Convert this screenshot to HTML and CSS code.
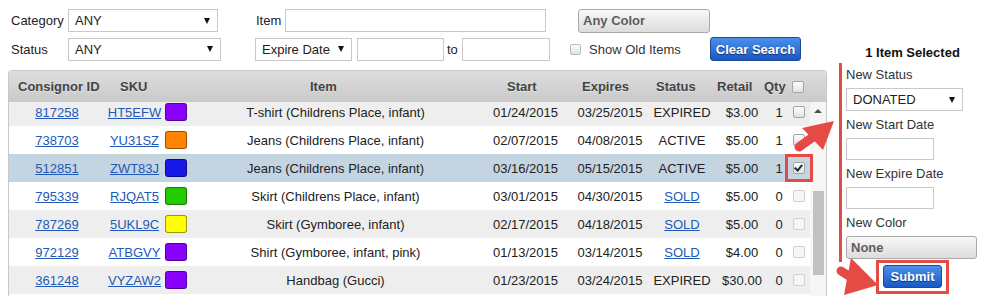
FILE: index.html
```html
<!DOCTYPE html>
<html lang="en">

<head>
    <meta charset="UTF-8">
    <meta name="viewport" content="width=device-width, initial-scale=1.0">
    <title>Consignment Inventory</title>
    <link rel="stylesheet" href="styles.css">
</head>

<body>
    <div class="page">
        <div class="main">
            <!-- Search filters -->
            <div class="filters">
                <div class="filter-row">
                    <span class="lbl">Category</span>
                    <div class="sel sel-cat"><span>ANY</span><i class="caret"></i></div>
                    <span class="lbl-item">Item</span>
                    <input class="txt txt-item" type="text">
                    <button class="btn-gray btn-color">Any Color</button>
                </div>
                <div class="filter-row">
                    <span class="lbl">Status</span>
                    <div class="sel sel-status"><span>ANY</span><i class="caret"></i></div>
                    <div class="sel sel-date"><span>Expire Date</span><i class="caret"></i></div>
                    <input class="txt txt-from" type="text">
                    <span class="to">to</span>
                    <input class="txt txt-to" type="text">
                    <input class="cb cb-old" type="checkbox">
                    <span class="old">Show Old Items</span>
                    <button class="btn-blue btn-clear">Clear Search</button>
                </div>
            </div>

            <!-- Items table -->
            <div class="grid">
                <div class="grid-head">
                    <span>Consignor ID</span>
                    <span>SKU</span>
                    <span>Item</span>
                    <span>Start</span>
                    <span>Expires</span>
                    <span>Status</span>
                    <span>Retail</span>
                    <span>Qty</span>
                    <span class="cell-cb"><input class="cb" type="checkbox"></span>
                </div>
                <div class="grid-body">
                    <div class="rows">
                        <div class="row">
                            <a href="#">817258</a><a href="#">HT5EFW</a><span class="swatch purple"></span>
                            <span>T-shirt (Childrens Place, infant)</span><span>01/24/2015</span><span>03/25/2015</span>
                            <span>EXPIRED</span><span>$3.00</span><span>1</span>
                            <span class="cell-cb"><input class="cb" type="checkbox"></span>
                        </div>
                        <div class="row">
                            <a href="#">738703</a><a href="#">YU31SZ</a><span class="swatch orange"></span>
                            <span>Jeans (Childrens Place, infant)</span><span>02/07/2015</span><span>04/08/2015</span>
                            <span>ACTIVE</span><span>$5.00</span><span>1</span>
                            <span class="cell-cb"><input class="cb" type="checkbox"></span>
                        </div>
                        <div class="row picked">
                            <a href="#">512851</a><a href="#">ZWT83J</a><span class="swatch blue"></span>
                            <span>Jeans (Childrens Place, infant)</span><span>03/16/2015</span><span>05/15/2015</span>
                            <span>ACTIVE</span><span>$5.00</span><span>1</span>
                            <span class="cell-cb"><span class="mark"><input class="cb" type="checkbox" checked></span></span>
                        </div>
                        <div class="row">
                            <a href="#">795339</a><a href="#">RJQAT5</a><span class="swatch green"></span>
                            <span>Skirt (Childrens Place, infant)</span><span>03/01/2015</span><span>04/30/2015</span>
                            <a href="#">SOLD</a><span>$5.00</span><span>0</span>
                            <span class="cell-cb"><input class="cb" type="checkbox" disabled></span>
                        </div>
                        <div class="row">
                            <a href="#">787269</a><a href="#">5UKL9C</a><span class="swatch yellow"></span>
                            <span>Skirt (Gymboree, infant)</span><span>02/17/2015</span><span>04/18/2015</span>
                            <a href="#">SOLD</a><span>$5.00</span><span>0</span>
                            <span class="cell-cb"><input class="cb" type="checkbox" disabled></span>
                        </div>
                        <div class="row">
                            <a href="#">972129</a><a href="#">ATBGVY</a><span class="swatch purple"></span>
                            <span>Shirt (Gymboree, infant, pink)</span><span>01/13/2015</span><span>03/14/2015</span>
                            <a href="#">SOLD</a><span>$4.00</span><span>0</span>
                            <span class="cell-cb"><input class="cb" type="checkbox" disabled></span>
                        </div>
                        <div class="row">
                            <a href="#">361248</a><a href="#">VYZAW2</a><span class="swatch purple"></span>
                            <span>Handbag (Gucci)</span><span>01/23/2015</span><span>03/24/2015</span>
                            <span>EXPIRED</span><span>$30.00</span><span>0</span>
                            <span class="cell-cb"><input class="cb" type="checkbox" disabled></span>
                        </div>
                    </div>
                    <div class="scroll">
                        <i class="up"></i>
                        <div class="thumb"></div>
                    </div>
                </div>
            </div>
        </div>

        <!-- Bulk edit panel -->
        <div class="side">
            <div class="sel-count">1 Item Selected</div>
            <div class="edit">
                <div class="field-lbl">New Status</div>
                <div class="sel sel-new"><span>DONATED</span><i class="caret"></i></div>
                <div class="field-lbl">New Start Date</div>
                <input class="txt txt-new" type="text">
                <div class="field-lbl">New Expire Date</div>
                <input class="txt txt-new" type="text">
                <div class="field-lbl">New Color</div>
                <button class="btn-gray btn-none">None</button>
            </div>
            <div class="submit-wrap">
                <span class="submit-box"><button class="btn-blue btn-submit">Submit</button></span>
            </div>
        </div>

        <!-- Annotation arrows -->
        <svg class="arrows" width="986" height="296" viewBox="0 0 986 296">
            <line x1="799" y1="147" x2="813" y2="137" stroke="#e64a45" stroke-width="9" stroke-linecap="round" />
            <polygon points="802,128 834,121 823,150" fill="#e64a45" />
            <line x1="841" y1="271" x2="849" y2="276" stroke="#e64a45" stroke-width="9" stroke-linecap="round" />
            <polygon points="851,258 878,285 844,295" fill="#e64a45" />
        </svg>
    </div>
</body>

</html>
```

FILE: styles.css
```css
body {
    margin: 0;
    font-family: 'Liberation Sans', Arial, sans-serif;
    font-size: 13px;
    color: #222;
    background: #fff;
    overflow: hidden;
}

a {
    color: #2259b8;
}

input,
button {
    font-family: inherit;
    font-size: 13px;
    margin: 0;
    box-sizing: border-box;
}

.page {
    position: relative;
    display: flex;
    height: 296px;
    overflow: hidden;
}

.main {
    width: 839px;
    flex: none;
}

.side {
    width: 147px;
    flex: none;
    padding-top: 45px;
}

/* filters */

.filters {
    padding: 9px 0 0 11px;
}

.filter-row {
    display: flex;
    align-items: center;
    height: 23px;
}

.filter-row + .filter-row {
    margin-top: 5px;
    height: 24px;
}

.lbl {
    width: 57px;
    flex: none;
}

.lbl-item {
    width: 29px;
    margin-left: 38px;
    flex: none;
}

.sel {
    display: flex;
    align-items: center;
    justify-content: space-between;
    box-sizing: border-box;
    height: 23px;
    padding: 0 7px 0 6px;
    border: 1px solid #c8c8c8;
    background: #fff;
    flex: none;
}

.caret {
    width: 0;
    height: 0;
    border-left: 3px solid transparent;
    border-right: 3px solid transparent;
    border-top: 6px solid #111;
}

.sel-cat {
    width: 150px;
}

.sel-status {
    width: 153px;
}

.sel-date {
    width: 97px;
    margin-left: 34px;
}

.txt {
    height: 23px;
    padding: 0 4px;
    border: 1px solid #c8c8c8;
    background: #fff;
    flex: none;
}

.txt-item {
    width: 261px;
}

.txt-from {
    width: 87px;
    margin-left: 5px;
}

.to {
    margin-left: 3px;
    width: 12px;
    flex: none;
}

.txt-to {
    width: 88px;
    margin-left: 3px;
}

.old {
    width: 121px;
    margin-left: 8px;
    color: #333;
    flex: none;
}

.btn-gray {
    height: 24px;
    padding: 0 4px;
    text-align: left;
    border: 1px solid #a9a9a9;
    border-radius: 3px;
    background: linear-gradient(#f8f8f8, #dcdcdc);
    color: #5e5e5e;
    font-weight: bold;
}

.btn-color {
    width: 132px;
    margin-left: 32px;
}

.btn-blue {
    height: 24px;
    padding: 0;
    white-space: nowrap;
    border: 1px solid #1c4c98;
    border-radius: 3px;
    background: linear-gradient(#4b90ea, #1a58c6);
    color: #fff;
    font-weight: bold;
    text-shadow: 0 1px 1px rgba(0, 0, 0, 0.55);
}

.btn-clear {
    width: 91px;
}

/* checkboxes */

.cb {
    appearance: none;
    -webkit-appearance: none;
    width: 12px;
    height: 12px;
    border: 1px solid #a3a3a3;
    border-radius: 2px;
    background: linear-gradient(#fdfdfd, #e2e2e2);
    flex: none;
}

.cb:disabled {
    border-color: #d0d0d0;
    background: #f6f6f6;
}

.cb:checked::after {
    content: '';
    display: block;
    width: 3px;
    height: 6px;
    margin: 0 auto;
    border: solid #2a2a2a;
    border-width: 0 2px 2px 0;
    transform: rotate(40deg);
}

.cb-old {
    width: 11px;
    height: 11px;
    margin-left: 20px;
    border-color: #bbb;
}

/* table */

.grid {
    margin: 9px 0 0 8px;
    width: 819px;
    box-sizing: border-box;
    border: 1px solid #c8c8c8;
    border-bottom: none;
    border-radius: 4px 4px 0 0;
}

.grid-head {
    display: grid;
    grid-template-columns: 102px 190px 197px 75px 74px 61px 47px 28px 1fr;
    align-items: center;
    height: 31px;
    padding-left: 9px;
    border-radius: 3px 3px 0 0;
    background: linear-gradient(#dedede, #c9c9c9);
    color: #444;
    font-weight: bold;
    text-shadow: 0 1px 0 rgba(255, 255, 255, 0.4);
}

.cell-cb {
    display: flex;
    align-items: center;
}

.grid-body {
    display: flex;
    height: 194px;
    overflow: hidden;
}

.rows {
    width: 801px;
    flex: none;
    margin-top: -4px;
}

.row {
    display: grid;
    grid-template-columns: 96px 59px 25px 293px 87px 82px 62px 58px 16px 23px;
    align-items: center;
    height: 28px;
    text-align: center;
}

.row:nth-child(odd) {
    background: #eee;
}

.row.picked {
    background: #c4d4e0;
}

.row .cell-cb {
    justify-content: center;
}

.mark {
    position: relative;
    z-index: 1;
    display: flex;
    align-items: center;
    justify-content: center;
    width: 28px;
    height: 28px;
    box-sizing: border-box;
    border: 3px solid #e64a45;
    flex: none;
}

.swatch {
    width: 22px;
    height: 18px;
    margin-left: 1px;
    box-sizing: border-box;
    border: 1px solid rgba(0, 0, 0, 0.4);
    border-radius: 3px;
}

.purple {
    background: #8800ff;
}

.orange {
    background: #ff8400;
}

.blue {
    background: #1818e6;
}

.green {
    background: #22cc00;
}

.yellow {
    background: #ffff00;
}

.scroll {
    flex: 1;
    display: flex;
    flex-direction: column;
    align-items: center;
    padding-top: 7px;
    background: #f6f6f6;
}

.up {
    width: 0;
    height: 0;
    border-left: 4px solid transparent;
    border-right: 4px solid transparent;
    border-bottom: 4px solid #505050;
}

.thumb {
    width: 11px;
    height: 84px;
    margin-top: 78px;
    background: #c1c1c1;
}

/* bulk edit */

.sel-count {
    line-height: 16px;
    text-align: center;
    font-weight: bold;
    color: #111;
}

.edit {
    margin-top: 2px;
    padding: 4px 9px 3px 4px;
    border-left: 3px solid #e64a45;
}

.field-lbl {
    line-height: 16px;
    margin-top: 6px;
    color: #333;
}

.field-lbl:first-child {
    margin-top: 0;
}

.edit .sel,
.edit .txt,
.edit .btn-gray {
    display: flex;
    margin-top: 5px;
}

.sel-new {
    width: 117px;
}

.txt-new {
    width: 88px;
    height: 22px;
}

.btn-none {
    width: 131px;
    height: 23px;
    align-items: center;
}

.submit-wrap {
    display: flex;
    justify-content: center;
    margin-top: -2px;
}

.submit-box {
    display: flex;
    padding: 2px 4px 3px;
    border: 3px solid #e64a45;
}

.btn-submit {
    width: 59px;
    height: 23px;
}

.arrows {
    position: absolute;
    top: 0;
    left: 0;
    z-index: 2;
    pointer-events: none;
}
```
